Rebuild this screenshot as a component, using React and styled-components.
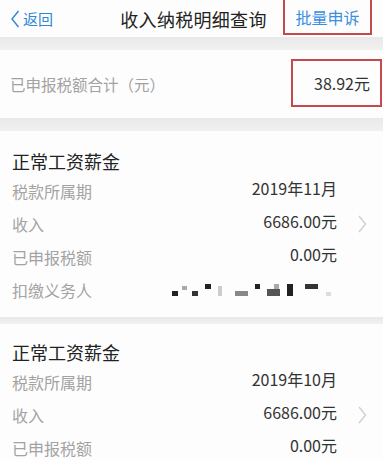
import styled, { createGlobalStyle } from "styled-components";

const GlobalStyle = createGlobalStyle`
  html, body {
    margin: 0;
    padding: 0;
    background: #efefef;
  }
  body {
    font-family: "Noto Sans CJK SC", "Noto Sans", sans-serif;
    width: 383px;
    overflow: hidden;
  }
`;

const Header = styled.header`
  height: 37px;
  background: #fdfdfd;
  display: grid;
  grid-template-columns: 100px 1fr 100px;
  align-items: center;
`;

const Back = styled.div`
  display: flex;
  align-items: center;
  gap: 2px;
  padding-left: 9px;
  color: #2d87d6;
  font-size: 15px;
  line-height: 1;
  svg {
    width: 12px;
    height: 18px;
  }
`;

const Title = styled.div`
  text-align: center;
  font-size: 18px;
  color: #222;
  letter-spacing: 0.3px;
  margin-left: 4px;
`;

const Action = styled.div`
  justify-self: end;
  margin-right: 11px;
  align-self: start;
  width: 85px;
  height: 32px;
  border: 2px solid #c24a4f;
  border-top: none;
  display: flex;
  align-items: center;
  justify-content: center;
  color: #3a8fe0;
  font-size: 16px;
  padding-top: 1px;
`;

const Band = styled.div`
  height: ${(p) => p.h}px;
  background: linear-gradient(#e9e9e9, #f1f1f1);
`;

const Summary = styled.section`
  height: 68px;
  background: #fdfdfd;
  display: flex;
  align-items: center;
  justify-content: space-between;
  padding-left: 10px;
  padding-right: 1px;
`;

const SummaryLabel = styled.span`
  font-size: 15.5px;
  color: #a2a2a2;
`;

const SummaryBox = styled.div`
  width: 91px;
  height: 48px;
  border: 2px solid #c44a50;
  display: flex;
  align-items: center;
  justify-content: flex-end;
  padding-right: 10px;
  box-sizing: border-box;
  font-size: 16px;
  color: #333;
  margin-top: -2px;
`;

const Card = styled.section`
  background: #fdfdfd;
  padding: ${(p) => p.top}px 0 11px 12px;
`;

const CardTitle = styled.h3`
  margin: 0;
  font-size: 18px;
  font-weight: 400;
  line-height: 26px;
  color: #222;
`;

const Row = styled.div`
  display: grid;
  grid-template-columns: 1fr auto 46px;
  align-items: center;
  height: 33px;
`;

const Label = styled.span`
  font-size: 16px;
  color: #a3a3a3;
`;

const Value = styled.span`
  font-size: 16px;
  color: #333;
  margin-top: ${(p) => (p.flat ? 0 : -6)}px;
  line-height: ${(p) => (p.flat ? 0 : "normal")};
`;

const Arrow = styled.span`
  display: flex;
  justify-content: center;
  padding-left: 4px;
  svg {
    width: 9px;
    height: 18px;
  }
`;

const Chevron = ({ color, left }) => (
  <svg viewBox="0 0 9 18" fill="none" stroke={color} strokeWidth="1.4">
    {left ? <path d="M8 1 L1.5 9 L8 17" /> : <path d="M1 1 L7.5 9 L1 17" />}
  </svg>
);

// pixelated (blurred-out) withholding agent name
const Mosaic = () => (
  <svg width="170" height="16" viewBox="0 0 170 16">
    <rect x="5" y="9" width="6" height="5" fill="#222" />
    <rect x="15" y="4" width="5" height="4" fill="#aaa" />
    <rect x="25" y="9" width="6" height="5" fill="#333" />
    <rect x="38" y="2" width="6" height="5" fill="#222" />
    <rect x="51" y="4" width="4" height="10" fill="#ccc" />
    <rect x="68" y="9" width="13" height="5" fill="#888" />
    <rect x="88" y="2" width="5" height="5" fill="#222" />
    <rect x="100" y="7" width="13" height="7" fill="#555" />
    <rect x="107" y="2" width="5" height="5" fill="#aaa" />
    <rect x="120" y="2" width="6" height="12" fill="#222" />
    <rect x="138" y="2" width="13" height="5" fill="#333" />
    <rect x="159" y="10" width="5" height="4" fill="#ddd" />
  </svg>
);

const records = [
  { period: "2019年11月", income: "6686.00元", tax: "0.00元", top: 17 },
  { period: "2019年10月", income: "6686.00元", tax: "0.00元", top: 15 },
];

export default function App() {
  return (
    <>
      <GlobalStyle />
      <Header>
        <Back>
          <Chevron color="#2d87d6" left />
          返回
        </Back>
        <Title>收入纳税明细查询</Title>
        <Action>批量申诉</Action>
      </Header>
      <Band h={13} />
      <Summary>
        <SummaryLabel>已申报税额合计（元）</SummaryLabel>
        <SummaryBox>38.92元</SummaryBox>
      </Summary>
      <Band h={13} />
      {records.map((r, i) => (
        <div key={i}>
          <Card top={r.top}>
            <CardTitle>正常工资薪金</CardTitle>
            <Row>
              <Label>税款所属期</Label>
              <Value>{r.period}</Value>
              <span />
            </Row>
            <Row>
              <Label>收入</Label>
              <Value>{r.income}</Value>
              <Arrow>
                <Chevron color="#cfcfcf" />
              </Arrow>
            </Row>
            <Row>
              <Label>已申报税额</Label>
              <Value>{r.tax}</Value>
              <span />
            </Row>
            <Row>
              <Label>扣缴义务人</Label>
              <Value flat>
                <Mosaic />
              </Value>
              <span />
            </Row>
          </Card>
          <Band h={7} />
        </div>
      ))}
    </>
  );
}
